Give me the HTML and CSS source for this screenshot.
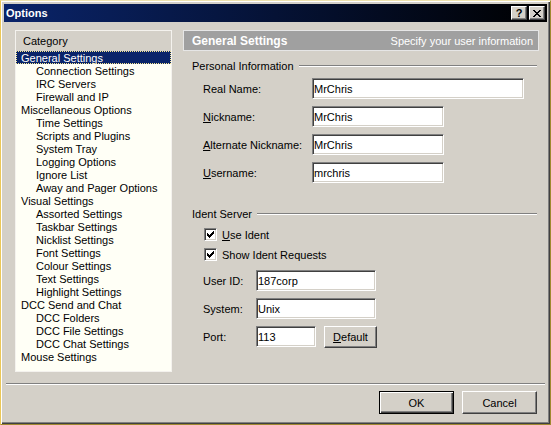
FILE: index.html
```html
<!DOCTYPE html>
<html lang="en">
<head>
	<meta charset="UTF-8">
	<title>Options</title>
	<link rel="stylesheet" href="styles.css">
</head>
<body>
	<div class="window">
		<!-- 标题栏 -->
		<div class="titlebar">
			<span class="title">Options</span>
			<div class="title-btns">
				<span class="tbtn help">?</span>
				<span class="tbtn close">
					<svg width="8" height="7" viewBox="0 0 8 7"><path d="M0 0h2v1h1v1h2v-1h1v-1h2v1h-1v1h-1v1h-1v1h1v1h1v1h1v1h-2v-1h-1v-1h-2v1h-1v1h-2v-1h1v-1h1v-1h1v-1h-1v-1h-1v-1h-1z" fill="#000"/></svg>
				</span>
			</div>
		</div>
		<div class="client">
			<div class="main">
				<!-- 左侧分类 -->
				<div class="category">
					<div class="cat-head">Category</div>
					<ul class="tree">
						<li class="sel">General Settings</li>
						<li class="sub">Connection Settings</li>
						<li class="sub">IRC Servers</li>
						<li class="sub">Firewall and IP</li>
						<li>Miscellaneous Options</li>
						<li class="sub">Time Settings</li>
						<li class="sub">Scripts and Plugins</li>
						<li class="sub">System Tray</li>
						<li class="sub">Logging Options</li>
						<li class="sub">Ignore List</li>
						<li class="sub">Away and Pager Options</li>
						<li>Visual Settings</li>
						<li class="sub">Assorted Settings</li>
						<li class="sub">Taskbar Settings</li>
						<li class="sub">Nicklist Settings</li>
						<li class="sub">Font Settings</li>
						<li class="sub">Colour Settings</li>
						<li class="sub">Text Settings</li>
						<li class="sub">Highlight Settings</li>
						<li>DCC Send and Chat</li>
						<li class="sub">DCC Folders</li>
						<li class="sub">DCC File Settings</li>
						<li class="sub">DCC Chat Settings</li>
						<li>Mouse Settings</li>
					</ul>
				</div>
				<!-- 右侧设置 -->
				<div class="panel">
					<div class="panel-head">
						<b>General Settings</b>
						<span>Specify your user information</span>
					</div>
					<div class="group-title"><span>Personal Information</span><i class="rule"></i></div>
					<div class="fields personal">
						<div class="row"><label>Real Name:</label><input class="edit long" value="MrChris"></div>
						<div class="row"><label><u>N</u>ickname:</label><input class="edit mid" value="MrChris"></div>
						<div class="row"><label><u>A</u>lternate Nickname:</label><input class="edit mid" value="MrChris"></div>
						<div class="row"><label><u>U</u>sername:</label><input class="edit mid" value="mrchris"></div>
					</div>
					<div class="group-title ident-title"><span>Ident Server</span><i class="rule"></i></div>
					<div class="checks">
						<div class="check"><span class="box"><svg width="7" height="7" viewBox="0 0 7 7"><path d="M0 2h1v1h1v1h1v-1h1v-1h1v-1h1v-1h1v3h-1v1h-1v1h-1v1h-1v1h-1v-1h-1v-1h-1z" fill="#000"/></svg></span><u>U</u>se Ident</div>
						<div class="check"><span class="box"><svg width="7" height="7" viewBox="0 0 7 7"><path d="M0 2h1v1h1v1h1v-1h1v-1h1v-1h1v-1h1v3h-1v1h-1v1h-1v1h-1v1h-1v-1h-1v-1h-1z" fill="#000"/></svg></span>Show Ident Requests</div>
					</div>
					<div class="fields ident">
						<div class="row"><label>User ID:</label><input class="edit short" value="187corp"></div>
						<div class="row"><label>System:</label><input class="edit short" value="Unix"></div>
						<div class="row"><label>Port:</label><input class="edit port" value="113"><button class="btn small"><u>D</u>efault</button></div>
					</div>
				</div>
			</div>
			<div class="sep"></div>
			<div class="actions">
				<button class="btn default">OK</button>
				<button class="btn">Cancel</button>
			</div>
		</div>
	</div>
</body>
</html>
```

FILE: styles.css
```css
html, body{
	margin: 0;
	padding: 0;
	background: #d4d0c8;
}
body{
	font-family: "Liberation Sans", Arial, sans-serif;
	font-size: 11px;
	color: #000;
}
/*窗口外框*/
.window{
	width: 551px;
	height: 425px;
	box-sizing: border-box;
	padding: 3px;
	background: #d4d0c8;
	border: 1px solid;
	border-color: #f0e4b0 #a08830 #a08830 #ecc858;
	box-shadow: inset 1px 1px #ffffff, inset -1px -1px #404040, inset -2px -2px #808080;
}
/*标题栏*/
.titlebar{
	height: 18px;
	display: flex;
	align-items: center;
	justify-content: space-between;
	background: linear-gradient(to right, #0a246a, #000000);
	padding: 0 2px 0 2px;
}
.titlebar .title{
	color: #fff;
	font-weight: bold;
	font-size: 11px;
}
.title-btns{
	display: flex;
	gap: 2px;
}
.tbtn{
	width: 16px;
	height: 14px;
	box-sizing: border-box;
	background: #d4d0c8;
	border: 1px solid;
	border-color: #fff #404040 #404040 #fff;
	box-shadow: inset -1px -1px #808080;
	display: flex;
	align-items: center;
	justify-content: center;
	font-weight: bold;
	font-size: 11px;
	line-height: 12px;
}
.client{
	display: flex;
	flex-direction: column;
}
.main{
	display: flex;
	margin-top: 8px;
	padding-left: 11px;
	height: 342px;
}
/*分类列表*/
.category{
	width: 157px;
	height: 342px;
	box-sizing: border-box;
	border: 1px solid #f4f2ee;
	background: #fffff6;
}
.cat-head{
	height: 20px;
	line-height: 20px;
	padding-left: 7px;
	background: #d4d0c8;
}
.tree{
	list-style: none;
	margin: 0;
	padding: 0;
}
.tree li{
	height: 13px;
	line-height: 15px;
	padding-left: 5px;
	white-space: nowrap;
}
.tree li.sub{
	padding-left: 20px;
}
.tree li.sel{
	background: #0a246a;
	color: #fff;
	outline: 1px dotted #f8e890;
	outline-offset: -1px;
}
/*右侧面板*/
.panel{
	width: 356px;
	margin-left: 11px;
}
.panel-head{
	height: 21px;
	box-sizing: border-box;
	border: 1px solid #e6e6e6;
	background: #a0a0a0;
	color: #fff;
	display: flex;
	align-items: center;
	justify-content: space-between;
	padding: 0 5px 0 8px;
}
.panel-head b{
	font-size: 12px;
}
.group-title{
	display: flex;
	align-items: center;
	height: 13px;
	margin-top: 8px;
	padding-left: 9px;
}
.group-title .rule{
	flex: 1;
	height: 0;
	margin: 0 2px 0 5px;
	border-top: 1px solid #808080;
	border-bottom: 1px solid #ffffff;
}
.ident-title{
	margin-top: 24px;
}
.fields{
	padding-left: 20px;
	margin-top: 6px;
}
.fields .row{
	height: 21px;
	display: flex;
	align-items: center;
}
.fields .row + .row{
	margin-top: 7px;
}
.personal label{
	width: 109px;
}
.ident{
	margin-top: 9px;
}
.ident label{
	width: 53px;
}
/*输入框*/
.edit{
	height: 21px;
	box-sizing: border-box;
	padding: 0 1px;
	margin: 0;
	font-family: "Liberation Sans", Arial, sans-serif;
	font-size: 11px;
	color: #000;
	background: #fff;
	border: 1px solid;
	border-color: #808080 #ffffff #ffffff #808080;
	box-shadow: inset 1px 1px #404040, inset -1px -1px #d4d0c8;
	outline: none;
}
.edit.long{ width: 212px; }
.edit.mid{ width: 132px; }
.edit.short{ width: 120px; }
.edit.port{ width: 60px; }
/*复选框*/
.checks{
	margin-top: 8px;
	padding-left: 21px;
}
.check{
	height: 13px;
	display: flex;
	align-items: center;
}
.check + .check{
	margin-top: 7px;
}
.check .box{
	width: 13px;
	height: 13px;
	box-sizing: border-box;
	background: #fff;
	border: 1px solid;
	border-color: #808080 #ffffff #ffffff #808080;
	box-shadow: inset 1px 1px #404040, inset -1px -1px #d4d0c8;
	display: flex;
	align-items: center;
	justify-content: center;
	margin-right: 5px;
}
/*按钮*/
.btn{
	width: 75px;
	height: 23px;
	box-sizing: border-box;
	padding: 0;
	font-family: "Liberation Sans", Arial, sans-serif;
	font-size: 11px;
	color: #000;
	background: #d4d0c8;
	border: 1px solid;
	border-color: #fff #404040 #404040 #fff;
	box-shadow: inset -1px -1px #808080;
}
.btn.default{
	border: 1px solid #000;
	box-shadow: inset 1px 1px #fff, inset -1px -1px #404040, inset -2px -2px #808080;
}
.btn.small{
	width: 53px;
	height: 22px;
	margin-left: 8px;
}
.sep{
	height: 0;
	margin: 11px 2px 0 2px;
	border-top: 1px solid #808080;
	border-bottom: 1px solid #ffffff;
}
.actions{
	display: flex;
	justify-content: flex-end;
	gap: 8px;
	margin-top: 6px;
	padding-right: 10px;
}
```
